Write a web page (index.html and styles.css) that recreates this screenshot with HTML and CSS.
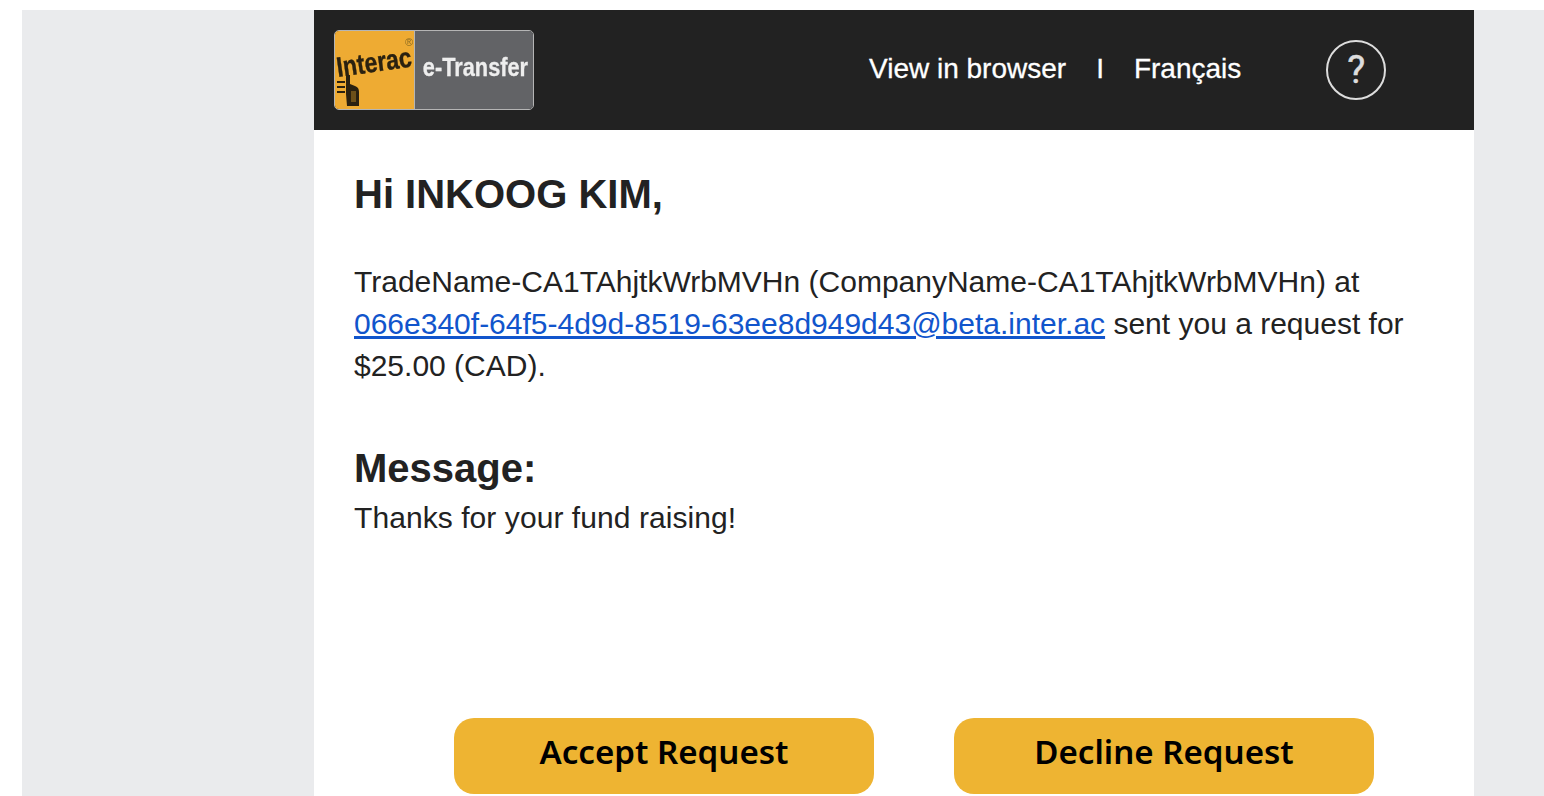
FILE: index.html
```html
<!DOCTYPE html>
<html lang="en">
<head>
<meta charset="utf-8">
<title>Interac e-Transfer request</title>
<link rel="stylesheet" href="styles.css">
</head>
<body>
<div class="page">
  <main class="card">
    <header class="top">
      <div class="logo">
        <div class="logo-left">
          <span class="reg">®</span>
          <span class="interac">Interac</span>
          <svg class="hand" viewBox="0 0 22 31" aria-hidden="true">
            <path d="M9 0h4v9l5 2c3 1 4 3 4 6v14H10l-1-12z" fill="#2a2110"/>
            <path d="M14 16h5v11h-5z" fill="#6d5019"/>
            <path d="M0 7h8M0 12h8M0 17h8" stroke="#2a2110" stroke-width="2"/>
          </svg>
        </div>
        <div class="logo-right"><span class="transfer">e-Transfer</span></div>
      </div>
      <nav class="links">
        <a class="link">View in browser</a>
        <span class="sep">I</span>
        <a class="link">Français</a>
      </nav>
      <div class="help">?</div>
    </header>
    <section class="content">
      <h1 class="greeting">Hi INKOOG KIM,</h1>
      <p class="intro">TradeName-CA1TAhjtkWrbMVHn (CompanyName-CA1TAhjtkWrbMVHn) at <a class="mail">066e340f-64f5-4d9d-8519-63ee8d949d43@beta.inter.ac</a> sent you a request for $25.00 (CAD).</p>
      <h2 class="msg-title">Message:</h2>
      <p class="msg">Thanks for your fund raising!</p>
      <div class="actions">
        <a class="btn">Accept Request</a>
        <a class="btn">Decline Request</a>
      </div>
    </section>
  </main>
</div>
</body>
</html>
```
FILE: styles.css
```css
html, body {
  margin: 0;
  padding: 0;
  height: 796px;
  overflow: hidden;
  background: #fff;
  font-family: "Liberation Sans", Arial, sans-serif;
  color: #222;
}
.page {
  margin: 10px 0 0 22px;
  height: 786px;
  background: #eaebed;
  padding-left: 292px;
  overflow: hidden;
}
.card {
  width: 1160px;
  height: 786px;
  background: #fff;
}
.top {
  height: 120px;
  background: #222;
  display: flex;
  align-items: center;
  padding-left: 20px;
  box-sizing: border-box;
}
.logo {
  width: 200px;
  height: 80px;
  box-sizing: border-box;
  display: flex;
  border: 1px solid #b5b5b5;
  border-radius: 5px;
  overflow: hidden;
  flex: none;
  filter: blur(0.6px);
}
.logo-left {
  width: 80px;
  background: #eeab33;
  position: relative;
  flex: none;
  border-right: 1px solid #b5b5b5;
  box-sizing: border-box;
}
.logo-right {
  flex: 1;
  background: #626366;
  display: flex;
  align-items: center;
  justify-content: center;
}
.transfer {
  color: #eee;
  font: bold 25px "Liberation Sans", sans-serif;
  transform: scaleX(0.87);
  white-space: nowrap;
  margin-top: -5px;
  -webkit-text-stroke: 0.3px #eee;
}
.interac {
  position: absolute;
  left: 3px;
  top: 21px;
  color: #2a2110;
  font: bold 28px "Liberation Sans", sans-serif;
  white-space: nowrap;
  transform-origin: 0 25px;
  transform: rotate(-8deg) scaleX(0.82);
  -webkit-text-stroke: 0.4px #2a2110;
}
.reg {
  position: absolute;
  right: 1px;
  top: 5px;
  font-size: 11px;
  color: #8a6a20;
}
.hand {
  position: absolute;
  left: 2px;
  top: 44px;
  width: 22px;
  height: 31px;
}
.links {
  margin-left: 335px;
  display: flex;
  align-items: center;
  color: #fff;
  font-size: 28px;
  margin-top: -3px;
  -webkit-text-stroke: 0.3px #fff;
}
.sep {
  margin: 0 30px;
}
.help {
  margin-left: 85px;
  width: 60px;
  height: 60px;
  box-sizing: border-box;
  border: 2px solid #ddd;
  border-radius: 50%;
  color: #ddd;
  font: 400 38px/56px Roboto, sans-serif;
  -webkit-text-stroke: 0.5px #ddd;
  text-align: center;
}
.content {
  padding: 40px 40px 0;
}
.greeting {
  margin: 0;
  font-size: 40px;
  line-height: 48px;
  font-weight: bold;
}
.intro {
  margin: 43px 0 0;
  font-size: 30px;
  line-height: 42px;
}
.mail {
  color: #1155cc;
  text-decoration: underline;
}
.msg-title {
  margin: 57px 0 0;
  font-size: 40px;
  line-height: 48px;
  font-weight: bold;
}
.msg {
  margin: 5px 0 0;
  font-size: 30px;
  line-height: 42px;
  letter-spacing: 0.07px;
}
.actions {
  margin-top: 179px;
  padding-left: 100px;
  display: flex;
  gap: 80px;
}
.btn {
  width: 420px;
  height: 76px;
  background: #eeb432;
  border-radius: 20px;
  color: #000;
  font: 600 33.1px/67px "Noto Sans", sans-serif;
  text-align: center;
}
```
